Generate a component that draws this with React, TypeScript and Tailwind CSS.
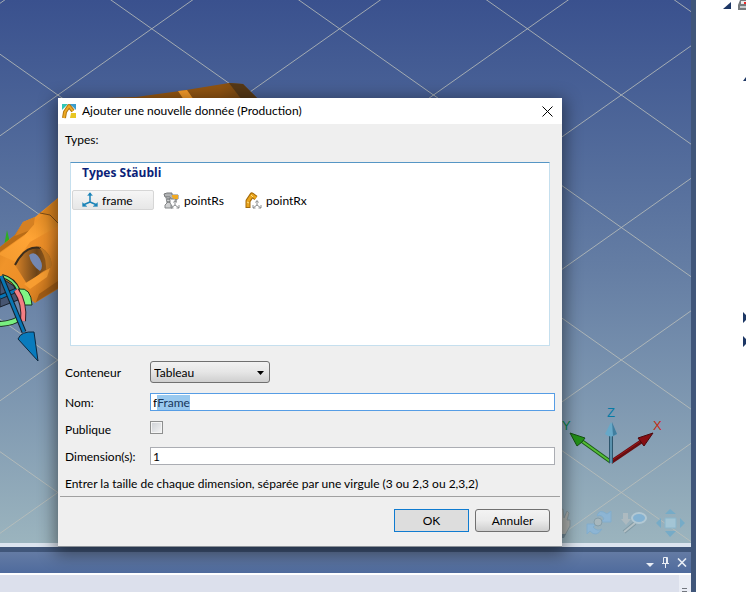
import { useRef, useEffect } from "react";

const GRID = [-5, -4, -3, -2, -1, 0, 1, 2, 3, 4, 5, 6, 7];

function Scene() {
  return (
    <svg className="absolute left-0 top-0 h-[543px] w-[691px]" viewBox="0 0 691 543" aria-hidden="true">
      <defs>
        <linearGradient id="arm" x1="0" y1="0" x2="1" y2="1">
          <stop offset="0" stopColor="#c87516" />
          <stop offset=".35" stopColor="#f0942a" />
          <stop offset=".65" stopColor="#ec8d27" />
          <stop offset="1" stopColor="#a45f14" />
        </linearGradient>
        <linearGradient id="top" x1="0" y1="1" x2="1" y2="0">
          <stop offset="0" stopColor="#f39a2f" />
          <stop offset=".5" stopColor="#ffa435" />
          <stop offset="1" stopColor="#d9831f" />
        </linearGradient>
        <linearGradient id="hole" x1="0" y1="0" x2="1" y2="0">
          <stop offset="0" stopColor="#d98327" />
          <stop offset=".6" stopColor="#6a4319" />
          <stop offset="1" stopColor="#b06a1d" />
        </linearGradient>
        <linearGradient id="link" x1="0" y1="0" x2="1" y2="0">
          <stop offset="0" stopColor="#9b5b12" />
          <stop offset=".75" stopColor="#8f5311" />
          <stop offset="1" stopColor="#6b4415" />
        </linearGradient>
      </defs>
      <g stroke="#bcbfba" strokeOpacity=".8" strokeWidth="1">
        {GRID.map((k) => (
          <g key={k}>
            <line x1="-130" y1={-37.5 + k * 132.5} x2="997" y2={757.5 + k * 132.5} />
            <line x1="-130" y1={227.5 + k * 132.5} x2="997" y2={-567.5 + k * 132.5} />
          </g>
        ))}
      </g>
      <path d="M105 98L136 97 180 91 229 83 243 84 259 100H105Z" fill="url(#link)" />
      <path d="M178 91L187 90 194 100H184Z" fill="#f59b29" />
      <path d="M229 83L243 84 259 100H242Z" fill="#553816" />
      <path d="M4 246L7 230 10 243Z" fill="#2fae22" />
      <path d="M0 247L15 235 23 222 35 217 58 198V289L35 303 17 290 0 276Z" fill="url(#arm)" />
      <path d="M0 247L15 235 23 223 33 218 34 229 24 235 0 252Z" fill="#b96c16" />
      <path d="M23 222L35 217 33 229 15 236Z" fill="#d58022" />
      <path d="M0 253L24 236 44 213 58 216V226L30 242 16 262 0 255Z" fill="url(#top)" />
      <path d="M40 214L58 198V222L50 215Z" fill="#d9831f" />
      <path d="M40 213L50 215 58 223" fill="none" stroke="#7d4d17" />
      <path d="M15 265C22 251 31 246 39 247C48 250 53 260 51 267L42 272 27 284Z" fill="url(#hole)" />
      <path d="M29 255Q35 250 40 259Q44 267 40 271Q31 265 29 255Z" fill="#7488b2" />
      <path d="M15 265C22 251 31 246 41 248" fill="none" stroke="#3c2d1c" strokeWidth="2" />
      <path d="M39 247C48 250 53 260 51 267L46 270Q47 257 39 247Z" fill="#c57a24" />
      <path d="M24 284L50 268 47 277 30 289Z" fill="#f79d31" />
      <path d="M36 302L39 294 58 281V288Z" fill="#9f5b15" />
      <path d="M0 277L14 286 18 300 0 307Z" fill="#465571" stroke="#18202c" />
      <path d="M0 297L17 290" stroke="#14202b" strokeWidth="5" />
      <path d="M0 297L17 290" stroke="#0674b5" strokeWidth="3" />
      <path d="M2 276Q14 279 19 291" fill="none" stroke="#1a251a" strokeWidth="4" />
      <path d="M2 276Q14 279 19 291" fill="none" stroke="#76e578" strokeWidth="2" />
      <path d="M19 289Q31 287 32 305L22 305Z" fill="#80f584" stroke="#18301a" />
      <path d="M16 290Q25 303 23 321" fill="none" stroke="#322024" strokeWidth="6" />
      <path d="M16 290Q25 303 23 321" fill="none" stroke="#f47e83" strokeWidth="4" />
      <path d="M0 324Q14 323 19 318" fill="none" stroke="#172b1a" strokeWidth="6" />
      <path d="M0 324Q14 323 19 318" fill="none" stroke="#79ef80" strokeWidth="4" />
      <path d="M1 276L24 332" stroke="#14202b" strokeWidth="5" />
      <path d="M1 276L24 332" stroke="#0875b3" strokeWidth="3" />
      <path d="M18 339Q21 331 34 332L38 361Z" fill="#087bbd" stroke="#0b2840" />
    </svg>
  );
}

function Axes() {
  return (
    <svg className="absolute left-[560px] top-[400px] h-[70px] w-[110px]" viewBox="560 400 110 70" aria-hidden="true">
      <g fontFamily="Liberation Sans, sans-serif" fontSize="13">
        <text x="607" y="417" fill="#087ba6">Z</text>
        <text x="562" y="430" fill="#07834b">Y</text>
        <text x="653" y="430" fill="#c12d12">X</text>
      </g>
      <path d="M611 462L579 439" stroke="#1b5b16" strokeWidth="4" />
      <path d="M611 462L579 439" stroke="#55bd36" strokeWidth="2" />
      <path d="M570 433L585 438 582 442 577 446Z" fill="#239018" stroke="#154f13" />
      <path d="M611 462L642 441" stroke="#670d10" strokeWidth="4" />
      <path d="M611 461L642 440" stroke="#9a1519" />
      <path d="M653 433L638 438 641 442 644 446Z" fill="#870d12" stroke="#4c080c" />
      <path d="M611 463V434" stroke="#2d566d" strokeWidth="4" />
      <path d="M611 463V434" stroke="#5a91ad" strokeWidth="2" />
      <path d="M611 422L605 434Q611 439 617 434Z" fill="#67a8c8" />
      <path d="M612 422L613 436 617 434Z" fill="#407e9f" />
    </svg>
  );
}

function ViewTools() {
  return (
    <svg className="absolute left-[560px] top-[505px] h-[36px] w-[131px]" viewBox="560 505 131 36" aria-hidden="true">
      <path d="M560 510L563 509 564 518 567 511 569 513 567 520 570 520 570 526 565 535H560Z" fill="#afb2af" stroke="#899a9f" />
      <path d="M560 534H566L564 538H560Z" fill="#738b98" />
      <g fill="#8db5d4" stroke="#82adcc">
        <path d="M597 516Q599 508 607 514L611 511V522H601L604 519Q602 514 597 516Z" />
        <path d="M602 529Q596 538 590 531L587 534V524H597L593 527Q597 532 602 529Z" />
      </g>
      <circle cx="598" cy="522" r="4" fill="#a7b7bd" stroke="#859ea9" />
      <path d="M623 513H628V519H631L626 525 621 519H623Z" fill="#adbac0" />
      <path d="M635 523L624 532" stroke="#819aa5" strokeWidth="4" />
      <path d="M635 523L624 532" stroke="#b3c0c5" strokeWidth="2" />
      <ellipse cx="639" cy="518" rx="7" ry="5" fill="#84b2d2" stroke="#b2c8d3" strokeWidth="2" />
      <path d="M665 518H676V528H665Z" fill="#a3c5d5" stroke="#8ab5ca" />
      <path d="M665 514L670 509 676 514ZM665 531H676L670 537ZM661 518V528L656 523ZM680 518V528L685 523Z" fill="#76abc7" />
    </svg>
  );
}

function FrameIcon() {
  return (
    <svg className="h-4 w-4" viewBox="0 0 16 16" fill="none" stroke="#1a83b8" aria-hidden="true">
      <path d="M8 10V1M8 10L1 13M8 10L15 13" strokeWidth="1.5" />
      <path d="M5.500 3.500L8 .5 10.500 3.500ZM.5 10.500V14.500H5ZM15.500 10.500V14.500H11Z" fill="#1a83b8" strokeWidth=".3" />
    </svg>
  );
}

function RobotMark() {
  return (
    <g fill="none" stroke="#8b8e90" strokeWidth="1">
      <path d="M12 13V9M12 13L8 16M12 13L16 16M10.500 10.500L12 8.500 13.500 10.500M8 13V16H10.500M16 13V16H13.500" />
    </g>
  );
}

function RsIcon() {
  return (
    <svg className="h-[17px] w-[17px]" viewBox="0 0 17 17" aria-hidden="true">
      <path d="M1 2L4 1H9V3H15V7H8L7 5H2Z" fill="#b1b3b4" stroke="#77797b" />
      <path d="M9 3H15V7H11L9 5Z" fill="#f2aa22" />
      <path d="M3 5H7V11L9 14V16H2V13L4 11Z" fill="#d0d1d2" stroke="#85888a" />
      <path d="M4 7H7M4 10H7M13 7V10" stroke="#55585b" />
      <RobotMark />
    </svg>
  );
}

function RxIcon() {
  return (
    <svg className="h-[17px] w-[17px]" viewBox="0 0 17 17" aria-hidden="true">
      <path d="M3 16V9L7 3L11 6" fill="none" stroke="#a46a0a" strokeWidth="5" strokeLinejoin="round" />
      <path d="M3 15V9L7 3L11 6" fill="none" stroke="#e9a51d" strokeWidth="3" strokeLinejoin="round" />
      <path d="M2 10L4 11M6 3L8 5" stroke="#ffe28a" />
      <RobotMark />
    </svg>
  );
}

function AppIcon() {
  return (
    <svg className="h-4 w-4" viewBox="0 0 16 16" aria-hidden="true">
      <path d="M1 1H7L1 7Z" fill="#31c6b6" />
      <path d="M8 1H15V7L12 4Z" fill="#3a9dce" />
      <path d="M10 10H15V15H9Z" fill="#e8c622" />
      <path d="M3 15L4 9L8 3L12 8" fill="none" stroke="#b07610" strokeWidth="4" strokeLinejoin="round" />
      <path d="M3 15L4 9L8 3L12 8" fill="none" stroke="#efaa25" strokeWidth="2" strokeLinejoin="round" />
    </svg>
  );
}

const FIELD = "h-[18px] w-full border bg-white px-[2px] text-[12px] leading-4 outline-none";

function Dialog() {
  const name = useRef<HTMLInputElement>(null);
  useEffect(() => {
    name.current?.focus();
    name.current?.setSelectionRange(1, 6);
  }, []);
  return (
    <section
      role="dialog"
      aria-labelledby="title"
      className="absolute left-[58px] top-[98px] flex w-[504px] flex-col border-b border-[#8c9299] bg-[#efefef] pb-[14px] shadow-[0_4px_16px_3px_rgba(0,0,0,0.45)]"
    >
      <header className="flex h-[26px] shrink-0 items-center bg-white pl-[3px] pr-[7px]">
        <AppIcon />
        <h1 id="title" className="ml-[5px] flex-1">Ajouter une nouvelle donnée (Production)</h1>
        <button aria-label="Fermer" className="flex h-4 w-4 items-center justify-center">
          <svg className="h-[11px] w-[11px]" viewBox="0 0 11 11" stroke="#000" aria-hidden="true"><path d="M.5 .5L10.500 10.500M10.500 .5L.5 10.500" /></svg>
        </button>
      </header>
      <p className="ml-[7px] mt-2 h-4">Types:</p>
      <div className="mx-3 mt-[14px] h-[184px] shrink-0 border border-t-[#5696c5] border-x-[#c5dfee] border-b-[#c5dfee] bg-white px-px">
        <h2 className="ml-[10px] mt-[2px] h-4 font-['Open_Sans','Noto_Sans',sans-serif] font-bold text-[#0b1f78]">Types Stäubli</h2>
        <div className="mt-[9px] flex">
          <button className="flex h-5 w-[82px] items-center gap-1 rounded-[2px] border border-[#d6d6d6] bg-linear-to-b from-[#f6f6f6] to-[#e7e7e7] pl-[9px]">
            <FrameIcon /><span className="pt-px">frame</span>
          </button>
          <button className="flex h-5 w-[82px] items-center gap-1 pl-[9px]"><RsIcon /><span className="pt-px">pointRs</span></button>
          <button className="flex h-5 w-[82px] items-center gap-1 pl-[9px]"><RxIcon /><span className="pt-px">pointRx</span></button>
        </div>
      </div>
      <form className="mt-[15px] grid grid-cols-[85px_1fr] grid-rows-[23px_18px_18px_18px] gap-y-[9px] pl-[7px] pr-[7px]">
        <label htmlFor="container" className="self-center">Conteneur</label>
        <div className="relative w-[120px]">
          <select id="container" className="h-[22px] w-full appearance-none rounded-[3px] border border-[#707070] bg-linear-to-b from-[#f2f2f2] via-[#e6e6e6] to-[#cfcfcf] pl-[3px] pt-px">
            <option>Tableau</option>
          </select>
          <svg className="pointer-events-none absolute right-[6px] top-[10px] h-1 w-[7px]" viewBox="0 0 7 4" aria-hidden="true"><path d="M0 0H7L3.500 4Z" /></svg>
        </div>
        <label htmlFor="name" className="self-end">Nom:</label>
        <input ref={name} id="name" defaultValue="fFrame" className={`${FIELD} border-[#569de5] selection:bg-[#99c9ef] selection:text-[#17375b]`} />
        <label htmlFor="public" className="self-end">Publique</label>
        <input id="public" type="checkbox" className="mt-px h-[13px] w-[13px] appearance-none border border-[#8e8f8f] bg-linear-to-br from-[#cdd0d5] to-[#f5f5f5] shadow-[inset_0_0_0_1px_#f4f4f4]" />
        <label htmlFor="dims" className="self-end">Dimension(s):</label>
        <input id="dims" defaultValue="1" className={`${FIELD} border-[#abadb3]`} />
      </form>
      <p className="ml-[7px] mt-[11px] h-4">Entrer la taille de chaque dimension, séparée par une virgule (3 ou 2,3 ou 2,3,2)</p>
      <hr className="ml-[2px] mr-[2px] mt-[4px] border-[#a0a0a0]" />
      <footer className="mt-3 flex justify-end gap-[6px] pr-3">
        <button className="h-[23px] w-[75px] border border-[#0f7bd0] bg-[#dddddd]">OK</button>
        <button className="h-[23px] w-[75px] rounded-[3px] border border-[#707070] bg-linear-to-b from-[#f3f3f3] via-[#ebebeb] to-[#cfcfcf] pt-px">Annuler</button>
      </footer>
    </section>
  );
}

export default function App() {
  return (
    <main className="relative flex h-screen overflow-hidden bg-white font-[Lato,sans-serif] text-[12px] leading-4 text-black">
      <div className="flex min-w-0 flex-1 flex-col border-r-[5px] border-[#40567a]">
        <div className="relative min-h-0 flex-1 overflow-hidden border-b-4 border-[#dce4ef] bg-linear-to-b from-[#3a518e] via-[#657ea4] to-[#9bb4be]">
          <Scene />
          <Axes />
          <ViewTools />
        </div>
        <div className="h-[5px] bg-[#40567a]" />
        <div className="flex h-[21px] items-center justify-end gap-[7px] bg-linear-to-b from-[#647ba4] to-[#4f6b9d] pr-[4px] text-white">
          <button aria-label="Options" className="pt-1"><svg className="h-1 w-[8px]" viewBox="0 0 8 4" fill="#e8edf5"><path d="M0 0H8L4 4Z" /></svg></button>
          <button aria-label="Épingler"><svg className="h-[11px] w-[9px]" viewBox="0 0 9 11" fill="none" stroke="#e8edf5"><path d="M2.500 6V.5H6.500V6M1 6.500H8M4.500 7V11M5.500 1V6" /></svg></button>
          <button aria-label="Fermer le panneau"><svg className="h-[9px] w-[10px]" viewBox="0 0 10 9" stroke="#e8edf5" strokeWidth="1.6"><path d="M1 .5L9 8.500M9 .5L1 8.500" /></svg></button>
        </div>
        <div className="flex h-[19px] justify-end border-t-2 border-white bg-[#dce0ec]">
          <div className="w-3 bg-[#eaedf5] pl-[3px] pt-[13px]"><div className="h-1 w-[5px] border-y border-[#73777f]" /></div>
        </div>
      </div>
      <aside className="w-[50px] shrink-0 bg-white">
        <svg className="h-[360px] w-full" viewBox="696 0 50 360" aria-hidden="true">
          <path d="M731 2V9H723Z" fill="#1d3765" />
          <path d="M740 0H746V10H738V5Z" fill="#777b7e" />
          <path d="M741 1H746V4H741Z" fill="#e9e9e9" /><path d="M744 2H746V4H744Z" fill="#ed2929" />
          <path d="M740 6H746V8H740Z" fill="#c7c9ca" />
          <path d="M746 77V81H743Z" fill="#1d3765" />
          <path d="M743 312V323L746 320V315ZM743 336V347L746 344V339Z" fill="#1d3765" />
        </svg>
      </aside>
      <Dialog />
    </main>
  );
}
